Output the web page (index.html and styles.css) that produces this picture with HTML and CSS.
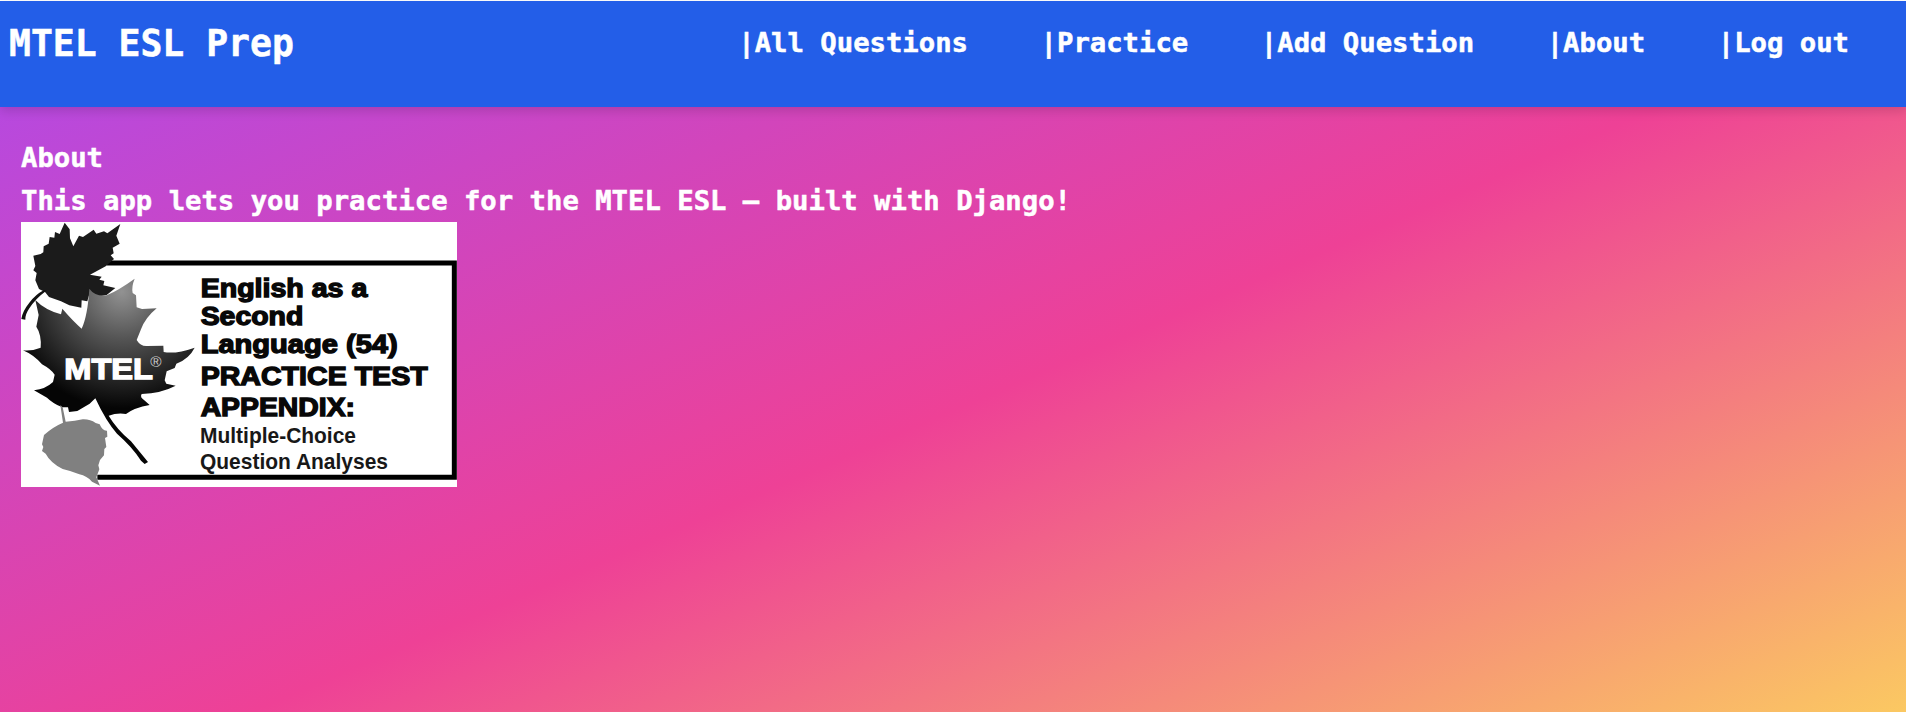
FILE: index.html
```html
<!DOCTYPE html>
<html lang="en">
<head>
<meta charset="utf-8">
<title>MTEL ESL Prep</title>
<link rel="stylesheet" href="styles.css">
</head>
<body>
<div class="page">
  <header class="navbar">
    <a class="brand">MTEL ESL Prep</a>
    <nav class="links">
      <a>|All Questions</a>
      <a>|Practice</a>
      <a>|Add Question</a>
      <a>|About</a>
      <a>|Log out</a>
    </nav>
  </header>
  <main class="content">
    <h1 class="line">About</h1>
    <p class="line">This app lets you practice for the MTEL ESL — built with Django!</p>
    <svg class="cover" viewBox="33 36 1308 795" preserveAspectRatio="none">
      <defs>
        <radialGradient id="leaf" gradientUnits="userSpaceOnUse" cx="335" cy="245" r="350">
          <stop offset="0" stop-color="#929292"/>
          <stop offset=".4" stop-color="#555"/>
          <stop offset=".75" stop-color="#262626"/>
          <stop offset="1" stop-color="#050505"/>
        </radialGradient>
      </defs>
      <rect x="33" y="36" width="1308" height="795" fill="#fff"/>
      <path d="M290 159H1333V802H262" fill="none" stroke="#000" stroke-width="15"/>
      <path d="M164 38L179 58L180 85L190 109L207 77L219 81L251 59L259 71L282 64L292 70L331 42L319 77L329 101L308 113L311 130L302 136L312 147L287 169L240 194L275 200L268 209L283 213L280 226L316 234L290 255L262 260L240 245L232 274L215 271L214 293L178 286L153 274L117 261L105 246L87 237L76 211L80 189L70 181L76 168L70 137L92 132L100 127L101 109L116 101L119 81L133 83L135 66L149 72Z" fill="#1b1b1b"/>
      <path d="M109 242Q76 266 58 295Q45 314 46 329L34 327Q37 304 58 278Q76 254 102 240Z" fill="#111"/>
      <path d="M76 270Q105 300 153 313L157 296Q188 332 215 356Q233 317 238 236Q255 260 290 256Q327 240 374 206Q364 230 368 249L378 256L380 292L396 297L440 295Q406 323 393 358L380 390Q392 410 412 408L460 407L461 426Q497 433 554 413Q537 447 499 461L494 474L470 484L464 511L469 521L497 527Q453 550 395 552Q389 562 402 570L419 585Q373 593 348 612Q321 608 296 617Q319 656 363 694L414 756L404 762L393 752Q367 711 321 671Q289 636 256 565L239 581L202 603L177 606L174 592L157 592Q128 580 111 563L72 541Q107 537 129 516L134 494Q122 477 96 463Q72 435 39 421Q65 424 92 413Q95 374 79 350L86 315Z" fill="url(#leaf)"/>
      <path d="M151 585L158 592L167 635Q196 634 218 628Q240 627 257 639L269 643Q277 663 291 662L292 680L285 684L289 711L283 717L282 736L270 750L265 766L268 778L259 802L270 827L246 815Q231 798 208 793Q188 784 158 777Q121 758 107 731L96 723L100 711L96 703L102 675Q128 651 159 638Z" fill="#808080"/>
      <g class="mark">
        <text x="163" y="508" font-size="88" textLength="266" lengthAdjust="spacingAndGlyphs">MTEL</text>
      </g>
      <text class="reg" x="421" y="472" font-size="46">®</text>
      <g class="heavy">
        <text x="572" y="262" font-size="75" textLength="500" lengthAdjust="spacingAndGlyphs">English as a</text>
        <text x="572" y="344" font-size="75" textLength="308" lengthAdjust="spacingAndGlyphs">Second</text>
        <text x="572" y="429" font-size="75" textLength="591" lengthAdjust="spacingAndGlyphs">Language (54)</text>
        <text x="572" y="524" font-size="77" textLength="681" lengthAdjust="spacingAndGlyphs">PRACTICE TEST</text>
        <text x="572" y="618" font-size="77" textLength="463" lengthAdjust="spacingAndGlyphs">APPENDIX:</text>
      </g>
      <g class="small">
        <text x="570" y="699" font-size="64" textLength="468" lengthAdjust="spacingAndGlyphs">Multiple-Choice</text>
        <text x="570" y="776" font-size="64" textLength="564" lengthAdjust="spacingAndGlyphs">Question Analyses</text>
      </g>
    </svg>
  </main>
</div>
</body>
</html>
```
FILE: styles.css
```css
html {
  background: #fff;
}

body {
  margin: 0;
  font-family: "DejaVu Sans Mono", monospace;
  font-weight: 700;
  font-size: 27.25px;
  color: #fff;
  -webkit-text-stroke: .5px #fff;
}

.page {
  height: 712px;
  border-top: 1px solid #fff;
  box-sizing: border-box;
  background: linear-gradient(to bottom right, #af4ae9, #ee4196, #fddd5a) 0 0 / 100% 819px no-repeat;
}

.navbar {
  display: flex;
  justify-content: space-between;
  align-items: flex-start;
  box-sizing: border-box;
  height: 106px;
  padding: 21px 57px 0 9px;
  background: #235ee8;
  box-shadow: 0 4px 10px rgba(0, 0, 0, .14);
}

.brand {
  font-size: 36.4px;
  line-height: 43px;
}

.links {
  display: flex;
  gap: 72.6px;
  line-height: 42px;
}

.content {
  padding: 29px 21px 0;
}

.line {
  margin: 0;
  font-size: inherit;
  line-height: 43px;
}

.cover {
  display: block;
  width: 436px;
  height: 265px;
  -webkit-text-stroke: 0;
}

.cover text {
  font-family: "Liberation Sans", sans-serif;
  font-weight: 700;
}

.mark {
  fill: #fff;
  stroke: #fff;
  stroke-width: 4;
}

.cover .reg {
  fill: #ccc;
  stroke: none;
  font-weight: 400;
}

.heavy {
  fill: #080808;
  stroke: #080808;
  stroke-width: 4;
}

.small {
  fill: #181818;
  stroke: none;
}
```
